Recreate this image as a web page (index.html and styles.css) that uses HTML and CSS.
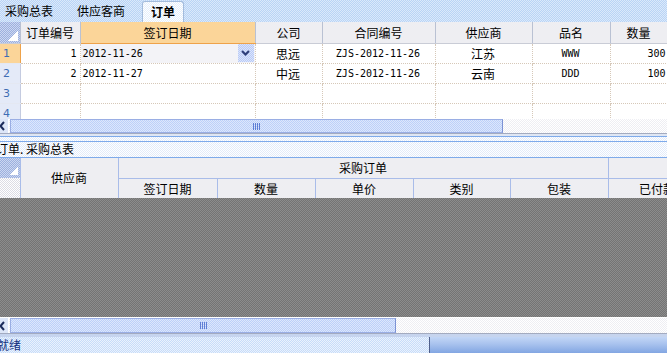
FILE: index.html
```html
<!DOCTYPE html>
<html lang="zh-CN">
<head>
    <meta charset="UTF-8">
    <title>订单</title>
    <link rel="stylesheet" href="styles.css">
</head>
<body>
<div class="app">
    <div class="tabs">
        <span class="tab first">采购总表</span>
        <span class="tab second">供应客商</span>
        <span class="tab active">订单</span>
    </div>

    <div class="grid-view">
        <table class="grid">
            <colgroup>
                <col style="width:20px"><col style="width:60px"><col style="width:175px"><col style="width:67px">
                <col style="width:113px"><col style="width:97px"><col style="width:78px"><col style="width:57px">
            </colgroup>
            <tr class="head">
                <th class="corner"></th>
                <th>订单编号</th>
                <th class="sel">签订日期</th>
                <th>公司</th>
                <th>合同编号</th>
                <th>供应商</th>
                <th>品名</th>
                <th>数量</th>
            </tr>
            <tr>
                <td class="rowhead cur">1</td>
                <td class="mono right">1</td>
                <td class="mono cell-sel"><div class="edit"><span>2012-11-26</span><span class="drop"><svg width="9" height="6" viewBox="0 0 9 6"><polyline points="1,1 4.5,4.5 8,1" fill="none" stroke="#2c3c78" stroke-width="2"/></svg></span></div></td>
                <td class="center">思远</td>
                <td class="mono center">ZJS-2012-11-26</td>
                <td class="center">江苏</td>
                <td class="mono center">WWW</td>
                <td class="mono right last">300</td>
            </tr>
            <tr>
                <td class="rowhead">2</td>
                <td class="mono right">2</td>
                <td class="mono">2012-11-27</td>
                <td class="center">中远</td>
                <td class="mono center">ZJS-2012-11-26</td>
                <td class="center">云南</td>
                <td class="mono center">DDD</td>
                <td class="mono right last">100</td>
            </tr>
            <tr>
                <td class="rowhead">3</td>
                <td></td><td></td><td></td><td></td><td></td><td></td><td></td>
            </tr>
            <tr>
                <td class="rowhead">4</td>
                <td></td><td></td><td></td><td></td><td></td><td></td><td></td>
            </tr>
        </table>
    </div>

    <div class="hscroll">
        <span class="arrow"><svg width="9" height="14" viewBox="0 0 9 14"><polyline points="4,3 0.5,7 4,11" fill="none" stroke="#1c2c5c" stroke-width="2"/></svg></span>
        <div class="thumb thumb-top"><span class="grip"></span></div>
        <div class="track"></div>
    </div>

    <div class="splitter"></div>
    <div class="caption">订单. 采购总表</div>

    <div class="band-view">
        <table class="grid band">
            <colgroup>
                <col style="width:20px"><col style="width:98px"><col style="width:99px"><col style="width:98px">
                <col style="width:98px"><col style="width:97px"><col style="width:98px"><col style="width:98px">
            </colgroup>
            <tr>
                <th class="corner"></th>
                <th rowspan="2">供应商</th>
                <th colspan="5">采购订单</th>
                <th></th>
            </tr>
            <tr>
                <th class="corner-low"></th>
                <th>签订日期</th>
                <th>数量</th>
                <th>单价</th>
                <th>类别</th>
                <th>包装</th>
                <th>已付款</th>
            </tr>
        </table>
    </div>

    <div class="empty"></div>

    <div class="hscroll low">
        <span class="arrow"><svg width="9" height="16" viewBox="0 0 9 16"><polyline points="4,4 0.5,8 4,12" fill="none" stroke="#1c2c5c" stroke-width="2"/></svg></span>
        <div class="thumb thumb-low"><span class="grip"></span></div>
        <div class="track"></div>
    </div>

    <div class="status">
        <span class="msg">就绪</span>
        <span class="panel"></span>
    </div>
</div>
</body>
</html>
```

FILE: styles.css
```css
*{
    margin: 0;
    padding: 0;
    box-sizing: border-box;
}
body{
    width: 667px;
    height: 353px;
    overflow: hidden;
    background: #ffffff;
    font-family: "Noto Sans CJK SC", sans-serif;
    font-size: 12px;
    color: #000000;
}
.app{
    display: flex;
    flex-direction: column;
    height: 353px;
}

/* tabs */
.tabs{
    height: 22px;
    flex: none;
    display: flex;
    align-items: flex-end;
    background: repeating-conic-gradient(#b9d4f5 0 25%, #dbe9fb 0 50%) 0 0 / 2px 2px;
}
.tab{
    height: 21px;
    line-height: 20px;
    padding: 0 4px;
    white-space: nowrap;
}
.tab.first{
    margin-left: 1px;
}
.tab.second{
    margin-left: 16px;
}
.tab.active{
    margin-left: 13px;
    padding: 0 8px;
    font-weight: bold;
    border: 1px solid #a4bcdc;
    border-bottom: none;
    border-radius: 3px 3px 0 0;
    background: repeating-conic-gradient(#ffffff 0 25%, #e4eefb 0 50%) 0 0 / 2px 2px;
}

/* grids */
.grid-view{
    height: 97px;
    flex: none;
    overflow: hidden;
}
.grid{
    border-collapse: collapse;
    table-layout: fixed;
    width: 667px;
}
.grid th{
    height: 21px;
    font-weight: normal;
    text-align: center;
    white-space: nowrap;
    overflow: hidden;
    border-right: 1px solid #b9c1d3;
    border-bottom: 1px solid #c9ccd6;
    background: repeating-conic-gradient(#ffffff 0 25%, #dcdce4 0 50%) 0 0 / 2px 2px;
}
.grid th.sel{
    border-left: 1px solid #eea24a;
    border-bottom-color: #eea24a;
    background: repeating-conic-gradient(#f9c77a 0 25%, #fde3b8 0 50%) 0 0 / 2px 2px;
}
.grid th.corner{
    background:
        linear-gradient(135deg, transparent 50%, #ffffff 50%) right 2px bottom 2px / 10px 10px no-repeat,
        repeating-conic-gradient(#9cb0de 0 25%, #ccd7f1 0 50%) 0 0 / 2px 2px;
}
.grid td{
    height: 20px;
    padding: 0 3px 0 2px;
    white-space: nowrap;
    overflow: hidden;
    border: 1px dotted #d6c8b8;
}
.grid td.last{
    padding-right: 1px;
}
.grid td.rowhead{
    padding-left: 3px;
    font-family: "DejaVu Sans", sans-serif;
    font-size: 11px;
    color: #3f6db4;
    border: none;
    border-right: 1px solid #c4cbe0;
    border-bottom: 1px solid #e4e8f2;
    background: repeating-conic-gradient(#d2dcf2 0 25%, #f6f8fd 0 50%) 0 0 / 2px 2px;
}
.grid td.rowhead.cur{
    border-right-color: #eea24a;
    background: repeating-conic-gradient(#f9c77a 0 25%, #fde3b8 0 50%) 0 0 / 2px 2px;
}
.grid td.cell-sel{
    padding-right: 1px;
    background: repeating-conic-gradient(#ffffff 0 25%, #e6e6ee 0 50%) 0 0 / 2px 2px;
}
.mono{
    font-family: "DejaVu Sans Mono", monospace;
    font-size: 10px;
}
.right{
    text-align: right;
}
.center{
    text-align: center;
}
.edit{
    display: flex;
    align-items: center;
    justify-content: space-between;
}
.drop{
    width: 16px;
    height: 18px;
    display: flex;
    align-items: center;
    justify-content: center;
    background: repeating-conic-gradient(#b9cbf7 0 25%, #dbe4fb 0 50%) 0 0 / 2px 2px;
}

/* scroll bars */
.hscroll{
    height: 15px;
    flex: none;
    display: flex;
    border-bottom: 1px solid #a3abc0;
    background: repeating-conic-gradient(#ffffff 0 25%, #eeeef3 0 50%) 0 0 / 2px 2px;
}
.hscroll.low{
    height: 17px;
    border-top: 1px solid #ffffff;
}
.arrow{
    width: 9px;
    flex: none;
    border-right: 1px solid #ffffff;
    background: #dde6f8;
}
.thumb{
    flex: none;
    margin-left: 1px;
    display: flex;
    align-items: center;
    justify-content: center;
    border: 1px solid #9aaee4;
    border-right-color: #7c92d4;
    background: repeating-conic-gradient(#bcd0f9 0 25%, #dde7fc 0 50%) 0 0 / 2px 2px;
}
.thumb-top{
    width: 493px;
}
.thumb-low{
    width: 386px;
}
.grip{
    width: 7px;
    height: 7px;
    background: repeating-linear-gradient(90deg, #5f7fd6 0 1px, transparent 1px 2px);
}
.track{
    flex: 1;
}

/* middle part */
.splitter{
    height: 8px;
    flex: none;
    background:
        linear-gradient(#dfe6f3 0 2px, #7eaaea 2px 3px, transparent 3px 7px, #7eaaea 7px 8px),
        repeating-conic-gradient(#ffffff 0 25%, #e2ebfa 0 50%) 0 0 / 2px 2px;
}
.caption{
    height: 16px;
    flex: none;
    line-height: 14px;
    margin-left: -4px;
    border-bottom: 1px solid #7eaaea;
    background: repeating-conic-gradient(#ffffff 0 25%, #e2ebfa 0 50%) 0 0 / 2px 2px;
}
.band-view{
    height: 40px;
    flex: none;
    overflow: hidden;
}
.grid.band{
    width: 706px;
}
.grid.band th{
    height: 20px;
    border-right: 1px solid #a9bce9;
    border-bottom: 1px solid #a9bce9;
}
.grid.band th.corner{
    border-bottom: none;
    background:
        linear-gradient(135deg, transparent 50%, #ffffff 50%) right 2px bottom 3px / 9px 9px no-repeat,
        repeating-conic-gradient(#9cb0de 0 25%, #ccd7f1 0 50%) 0 0 / 2px 2px;
}
.grid.band th.corner-low{
    border-bottom: none;
}
.empty{
    height: 119px;
    flex: none;
    background: repeating-conic-gradient(#747474 0 25%, #8c8c8c 0 50%) 0 0 / 2px 2px;
}

/* status bar */
.status{
    height: 19px;
    flex: none;
    display: flex;
    border-top: 3px solid #c6d4ee;
}
.msg{
    width: 433px;
    margin-left: -3px;
    line-height: 16px;
    color: #12307e;
    border-right: 1px solid #50608c;
    background: repeating-conic-gradient(#c7dcf9 0 25%, #eaf2fd 0 50%) 0 0 / 2px 2px;
}
.panel{
    flex: 1;
    background: linear-gradient(#c2d6f6, #a8c2ee 45%, #82a6e2);
}
```
